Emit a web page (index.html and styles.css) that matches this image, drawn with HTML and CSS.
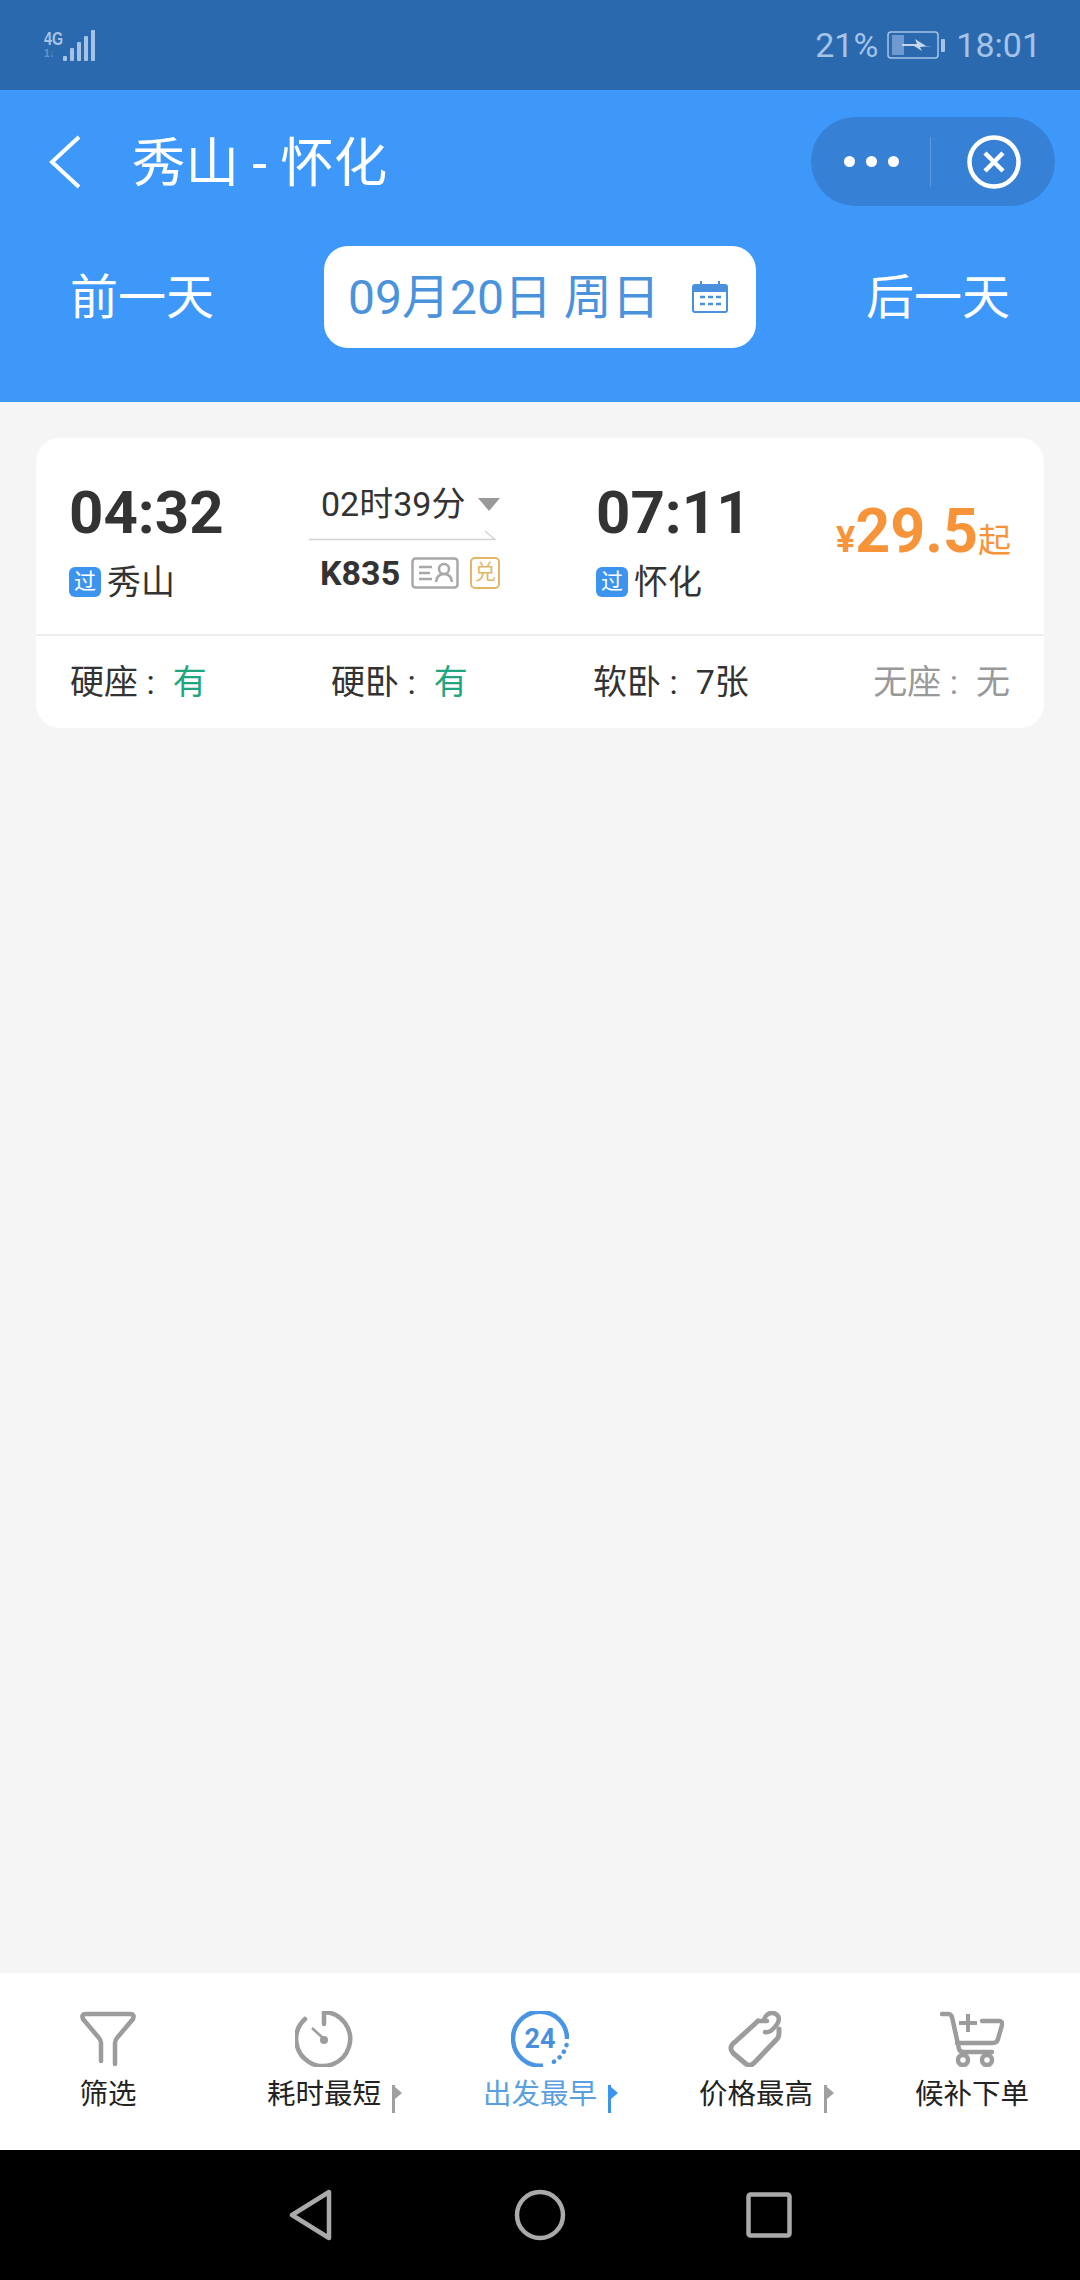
FILE: index.html
```html
<!DOCTYPE html>
<html lang="zh-CN">
    <head>
        <meta charset="UTF-8">
        <meta name="viewport" content="width=device-width, initial-scale=1.0">
        <title>秀山 - 怀化</title>
        <link rel="stylesheet" href="styles.css">
    </head>
    <body>
        <!-- status bar -->
        <div class="status">
            <div class="signal">
                <div class="net"><span class="net-top">4G</span><span class="net-sub">1↓</span></div>
                <div class="bars">
                    <i class="bar bar-1"></i><i class="bar bar-2"></i><i class="bar bar-3"></i><i class="bar bar-4"></i><i class="bar bar-5"></i>
                </div>
            </div>
            <div class="status-right">
                <span>21%</span>
                <svg class="battery" width="60" height="28" viewBox="0 0 60 28">
                    <rect x="1" y="1" width="50" height="26" rx="3" fill="none" stroke="#a5c3e6" stroke-width="1.5"/>
                    <rect x="5" y="4" width="12" height="20" fill="#6f9ad0"/>
                    <rect x="54" y="8" width="4" height="13" rx="1" fill="#a5c3e6"/>
                    <path d="M15 13 L30 13 L28 8 L39 15 L45 15 L33 16 L35 20 L27 15 L15 15 Z" fill="#c4d8ef"/>
                </svg>
                <span>18:01</span>
            </div>
        </div>

        <header class="topbar">
            <div class="title-row">
                <svg class="back" width="34" height="54" viewBox="0 0 34 54">
                    <path d="M31 2 L4 27 L31 52" fill="none" stroke="#fff" stroke-width="4"/>
                </svg>
                <h1 class="title">秀山 - 怀化</h1>
                <div class="capsule">
                    <div class="dots"><i class="dot"></i><i class="dot"></i><i class="dot"></i></div>
                    <div class="capsule-line"></div>
                    <svg class="close" width="54" height="54" viewBox="0 0 54 54">
                        <circle cx="27" cy="27" r="24.5" fill="none" stroke="#fff" stroke-width="4.5"/>
                        <path d="M18 18 L36 36 M36 18 L18 36" stroke="#fff" stroke-width="4.5"/>
                    </svg>
                </div>
            </div>
            <div class="date-row">
                <a class="day-link">前一天</a>
                <div class="date-pill">
                    <span class="date-text">09月20日 周日</span>
                    <svg width="36" height="32" viewBox="0 0 36 32">
                        <path d="M3 4 H33 Q35 4 35 6 V29 Q35 31 33 31 H3 Q1 31 1 29 V6 Q1 4 3 4 Z" fill="none" stroke="#4a90de" stroke-width="2"/>
                        <path d="M1 6 Q1 4 3 4 H33 Q35 4 35 6 V11 H1 Z" fill="#4a90de"/>
                        <path d="M9 0 V5 M27 0 V5" stroke="#4a90de" stroke-width="2"/>
                        <path d="M8 16 H13 M16 16 H21 M24 16 H29 M8 23 H13 M16 23 H21 M24 23 H29" stroke="#4a90de" stroke-width="2.5"/>
                    </svg>
                </div>
                <a class="day-link">后一天</a>
            </div>
        </header>

        <main class="content">
            <section class="card">
                <div class="train">
                    <div class="stop">
                        <div class="time">04:32</div>
                        <div class="station"><span class="tag">过</span>秀山</div>
                    </div>
                    <div class="trip">
                        <div class="duration">02时39分<i class="caret"></i></div>
                        <svg class="arrow" width="188" height="12" viewBox="0 0 188 12">
                            <path d="M0 10.5 H186 L176 2" fill="none" stroke="#d4d4d4" stroke-width="1.6"/>
                        </svg>
                        <div class="number">
                            <span>K835</span>
                            <svg width="48" height="32" viewBox="0 0 48 32">
                                <rect x="1.5" y="1.5" width="45" height="29" rx="3" fill="none" stroke="#a8a8a8" stroke-width="2.5"/>
                                <path d="M8 10 H21 M8 16 H19 M8 22 H21" stroke="#a8a8a8" stroke-width="2.5"/>
                                <circle cx="33" cy="12" r="5" fill="none" stroke="#a8a8a8" stroke-width="2.5"/>
                                <path d="M25 25 Q26 17 33 17 Q40 17 41 25" fill="none" stroke="#a8a8a8" stroke-width="2.5"/>
                            </svg>
                            <span class="redeem">兑</span>
                        </div>
                    </div>
                    <div class="stop">
                        <div class="time">07:11</div>
                        <div class="station"><span class="tag">过</span>怀化</div>
                    </div>
                    <div class="price"><span class="yen">¥</span><span class="amount">29.5</span><span class="from">起</span></div>
                </div>
                <div class="seats">
                    <div class="seat">硬座 :<span class="seat-val green">有</span></div>
                    <div class="seat">硬卧 :<span class="seat-val green">有</span></div>
                    <div class="seat">软卧 :<span class="seat-val">7张</span></div>
                    <div class="seat seat-none">无座 :<span class="seat-val">无</span></div>
                </div>
            </section>
        </main>

        <nav class="tabs">
            <div class="tab">
                <svg width="58" height="56" viewBox="0 0 58 56">
                    <path d="M22 50 V32 Q22 29 20 27 L4 8 Q2 3 7 3 H51 Q56 3 54 8 L38 27 Q36 29 36 32 V53" fill="none" stroke="#9c9c9c" stroke-width="4.5" stroke-linecap="round"/>
                </svg>
                <span class="tab-label">筛选</span>
            </div>
            <div class="tab">
                <svg width="58" height="56" viewBox="0 1 58 56">
                    <path d="M29 14 V2 A27 27 0 1 1 10 9" fill="none" stroke="#9c9c9c" stroke-width="4.5" stroke-linecap="round"/>
                    <path d="M17 18 L29 29" stroke="#9c9c9c" stroke-width="2.5"/>
                    <circle cx="29" cy="30" r="4" fill="#9c9c9c"/>
                </svg>
                <span class="tab-label">耗时最短<i class="flag"></i></span>
            </div>
            <div class="tab tab-active">
                <svg width="58" height="56" viewBox="0 1 58 56">
                    <path d="M32 55.5 A27 27 0 1 1 56 29" fill="none" stroke="#4a94e4" stroke-width="4.5"/>
                    <path d="M55.5 35 A27 27 0 0 1 38 54" fill="none" stroke="#4a94e4" stroke-width="4.5" stroke-linecap="round" stroke-dasharray="0.1 7"/>
                    <text x="29" y="38" text-anchor="middle" class="icon-24">24</text>
                </svg>
                <span class="tab-label">出发最早<i class="flag"></i></span>
            </div>
            <div class="tab">
                <svg width="58" height="56" viewBox="0 0 58 56">
                    <path d="M31 10 L8 31 Q1 36 6 42 L19 53 Q23 56 27 52 L50 28 Q52 26 52 22 V18" fill="none" stroke="#9c9c9c" stroke-width="5" stroke-linejoin="round" stroke-linecap="round"/>
                    <path d="M31 10 H40 M38 21 Q42 22 46 18 Q54 10 51 5 Q47 0 41 3 Q37 6 37 10" fill="none" stroke="#9c9c9c" stroke-width="4.5" stroke-linecap="round"/>
                </svg>
                <span class="tab-label">价格最高<i class="flag"></i></span>
            </div>
            <div class="tab">
                <svg width="64" height="56" viewBox="0 0 64 56">
                    <path d="M2 3 H8 Q11 3 12 6 L19 38 Q20 41 23 41 H52" fill="none" stroke="#9c9c9c" stroke-width="4.5" stroke-linecap="round"/>
                    <path d="M42 10 H59 Q63 10 62 14 L58 28 Q57 32 53 32 H17" fill="none" stroke="#9c9c9c" stroke-width="4.5" stroke-linecap="round"/>
                    <path d="M28 3 V21 M19 12 H37" stroke="#9c9c9c" stroke-width="4"/>
                    <circle cx="23" cy="49" r="5" fill="none" stroke="#9c9c9c" stroke-width="4.5"/>
                    <circle cx="47" cy="49" r="5" fill="none" stroke="#9c9c9c" stroke-width="4.5"/>
                </svg>
                <span class="tab-label">候补下单</span>
            </div>
        </nav>

        <div class="softkeys">
            <svg width="46" height="52" viewBox="0 0 46 52">
                <path d="M41 3 V49 L4 26 Z" fill="none" stroke="#aaa" stroke-width="4.5" stroke-linejoin="round"/>
            </svg>
            <svg width="52" height="52" viewBox="0 0 52 52">
                <circle cx="26" cy="26" r="23" fill="none" stroke="#aaa" stroke-width="4.5"/>
            </svg>
            <svg width="46" height="46" viewBox="0 0 46 46">
                <rect x="2.5" y="2.5" width="41" height="41" rx="2" fill="none" stroke="#aaa" stroke-width="4.5"/>
            </svg>
        </div>
    </body>
</html>
```

FILE: styles.css
```css
* {
    box-sizing: border-box;
}

body {
    margin: 0;
    height: 2280px;
    display: flex;
    flex-direction: column;
    font-family: Roboto, "Noto Sans CJK SC", sans-serif;
    background-color: #f5f5f5;
    color: #333;
    overflow: hidden;
}

/* status bar */
.status {
    height: 90px;
    padding: 0 39px 0 44px;
    background-color: #2b69ae;
    color: #a5c3e6;
    display: flex;
    justify-content: space-between;
    align-items: center;
}

.signal {
    display: flex;
    align-items: flex-end;
    gap: 0;
    height: 32px;
}

.net {
    width: 19px;
    display: flex;
    flex-direction: column;
    font-family: "Liberation Sans", sans-serif;
    font-weight: bold;
    line-height: 1;
}

.net-top {
    font-size: 19px;
    height: 20px;
    transform: scaleX(0.75);
    transform-origin: left;
}

.net-sub {
    font-size: 10px;
    height: 12px;
    opacity: 0.5;
}

.bars {
    display: flex;
    align-items: flex-end;
    gap: 3px;
}

.bar {
    width: 4px;
    background-color: #a5c3e6;
    border-radius: 1px;
}

.bar-1 { height: 5px; }
.bar-2 { height: 13px; }
.bar-3 { height: 19px; }
.bar-4 { height: 25px; }
.bar-5 { height: 31px; }

.status-right {
    display: flex;
    align-items: center;
    gap: 9px;
    font-size: 34px;
}

/* header */
.topbar {
    height: 312px;
    background-color: #3d98fa;
    color: #fff;
}

.title-row {
    height: 116px;
    padding: 27px 25px 0 48px;
    display: flex;
    align-items: center;
}

.title {
    margin: 0 0 0 50px;
    padding-bottom: 6px;
    flex: 1;
    font-size: 53.5px;
    font-weight: normal;
    white-space: pre;
}

.capsule {
    width: 244px;
    height: 89px;
    border-radius: 45px;
    background-color: #3680d5;
    display: flex;
    align-items: center;
}

.dots {
    width: 119px;
    padding-left: 33px;
    display: flex;
    gap: 11px;
}

.dot {
    width: 11px;
    height: 11px;
    border-radius: 50%;
    background-color: #fff;
}

.capsule-line {
    width: 1px;
    height: 50px;
    background-color: #5a9be2;
}

.close {
    margin-left: 36px;
}

.date-row {
    margin-top: 40px;
    padding: 0 70px;
    display: flex;
    justify-content: space-between;
    align-items: center;
}

.day-link {
    padding-bottom: 8px;
    font-size: 48px;
}

.date-pill {
    width: 432px;
    height: 102px;
    padding: 0 28px 0 24px;
    border-radius: 24px;
    background-color: #fff;
    color: #4a93dc;
    display: flex;
    justify-content: space-between;
    align-items: center;
}

.date-text {
    padding-bottom: 8px;
    font-size: 48px;
}

/* list */
.content {
    flex: 1;
    padding: 36px;
}

.card {
    height: 290px;
    border-radius: 24px;
    background-color: #fff;
}

.train {
    height: 198px;
    padding: 0 34px;
    border-bottom: 2px solid #eee;
    display: grid;
    grid-template-columns: 239px 288px 239px 1fr;
}

.stop {
    padding-top: 40px;
}

.time {
    height: 70px;
    margin-left: -1px;
    font-size: 60px;
    font-weight: bold;
    line-height: 70px;
}

.station {
    margin-top: 14px;
    margin-left: -1px;
    display: flex;
    align-items: center;
    gap: 6px;
    font-size: 34px;
    line-height: 40px;
}

.tag {
    width: 32px;
    height: 30px;
    border-radius: 6px;
    background-color: #3d94ee;
    color: #fff;
    font-size: 22px;
    line-height: 30px;
    text-align: center;
}

.trip {
    padding-top: 46px;
}

.duration {
    padding-left: 12px;
    font-size: 34px;
    line-height: 40px;
    display: flex;
    align-items: center;
}

.caret {
    margin-left: 13px;
    border-top: 13px solid #999;
    border-left: 11px solid transparent;
    border-right: 11px solid transparent;
}

.arrow {
    display: block;
    margin-top: 5px;
}

.number {
    margin-top: 14px;
    padding-left: 11px;
    height: 36px;
    display: flex;
    align-items: center;
    gap: 11px;
    font-size: 34px;
    font-weight: bold;
}

.redeem {
    width: 30px;
    height: 32px;
    border: 2px solid #e3b566;
    border-radius: 5px;
    color: #e3b566;
    font-size: 21px;
    font-weight: normal;
    line-height: 27px;
    text-align: center;
}

.price {
    padding-top: 57px;
    padding-right: 1px;
    color: #f7943a;
    text-align: right;
    white-space: nowrap;
}

.yen {
    font-size: 36px;
    font-weight: bold;
}

.amount {
    font-size: 61px;
    font-weight: bold;
}

.from {
    font-size: 33px;
}

.seats {
    height: 92px;
    padding: 0 34px 6px;
    display: grid;
    grid-template-columns: 261px 262px 1fr auto;
    align-items: center;
    font-size: 34px;
}

.seat {
    white-space: pre;
}

.seat-val {
    margin-left: 18px;
}

.green {
    color: #1fa67f;
}

.seat-none {
    color: #999;
}

/* bottom tabs */
.tabs {
    height: 177px;
    padding-top: 38px;
    background-color: #fff;
    display: grid;
    grid-template-columns: repeat(5, 1fr);
}

.tab {
    display: flex;
    flex-direction: column;
    align-items: center;
    height: 100px;
}

.tab svg {
    flex: none;
}

.tab-label {
    position: relative;
    margin-top: 10px;
    font-size: 28.5px;
    line-height: 36px;
    color: #222;
    white-space: nowrap;
}

.tab-active .tab-label {
    color: #5aa0e0;
}

.icon-24 {
    font-family: Roboto, sans-serif;
    font-size: 27px;
    font-weight: bold;
    fill: #4a8fdc;
}

.flag {
    position: absolute;
    left: calc(100% + 11px);
    top: 8px;
    width: 3px;
    height: 28px;
    background-color: #a0a0a0;
}

.flag::after {
    content: "";
    position: absolute;
    left: 3px;
    top: 2px;
    border-left: 7px solid #a0a0a0;
    border-top: 6px solid transparent;
    border-bottom: 6px solid transparent;
}

.tab-active .flag {
    background-color: #3d94ee;
}

.tab-active .flag::after {
    border-left-color: #3d94ee;
}

/* android nav */
.softkeys {
    height: 130px;
    padding: 0 288px;
    background-color: #000;
    display: flex;
    justify-content: space-between;
    align-items: center;
}
```
